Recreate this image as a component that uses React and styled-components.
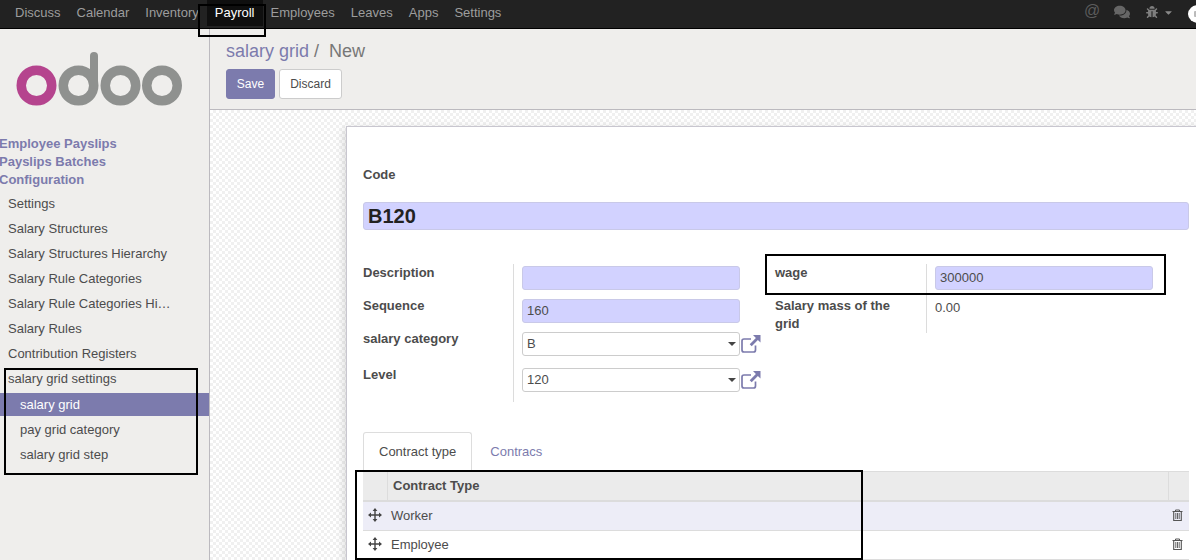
import React from "react";
import styled, { createGlobalStyle } from "styled-components";
import { FaComments, FaBug, FaCaretDown } from "react-icons/fa";

const Global = createGlobalStyle`
  html, body { margin: 0; padding: 0; width: 1196px; height: 560px; overflow: hidden; background: #fff; }
  body { font-family: "Liberation Sans", Arial, sans-serif; font-size: 13px; color: #4c4c4c; }
  * { box-sizing: border-box; }
`;

const Page = styled.div`
  position: relative;
  width: 1196px;
  height: 560px;
  overflow: hidden;
  display: flex;
  flex-direction: column;
`;
const TopNav = styled.nav`
  height: 29px;
  flex: none;
  background: #222;
  border-bottom: 1px solid #000;
  padding-left: 7px;
  display: flex;
  align-items: flex-start;
  overflow: hidden;
`;
const NavItem = styled.div`
  height: 26px;
  line-height: 26px;
  padding: 0 8px;
  color: ${(p) => (p.$active ? "#fff" : "#9d9d9d")};
  background: ${(p) => (p.$active ? "#0f0f0f" : "transparent")};
`;
const NavRight = styled.div`
  margin-left: auto;
  display: flex;
  align-items: center;
  height: 28px;
  color: #666;
  width: 112px;
  flex: none;
`;
const At = styled.span`
  font-size: 16px;
  width: 30px;
  margin-bottom: 6px;
  flex: none;
  color: #5c5c5c;
`;
const NavIcon = styled.span`
  display: inline-flex;
  flex: none;
  margin-bottom: 4px;
  margin-right: ${(p) => p.$gap || 0}px;
`;
const Avatar = styled.span`
  width: 20px;
  height: 18px;
  border-radius: 50% 0 0 50%;
  background: #fff;
  margin-left: 14px;
  flex: none;
  display: flex;
  align-items: center;
  padding-left: 6px;
  &::after {
    content: "";
    width: 6px;
    height: 6px;
    background: #bbb;
    border-radius: 1px;
  }
`;
const Main = styled.div`
  flex: 1;
  display: flex;
  min-height: 0;
`;
const Sidebar = styled.aside`
  width: 210px;
  flex: none;
  background: #efeeec;
  border-right: 1px solid #bcbabf;
`;
const LogoWrap = styled.div`
  height: 106px;
  padding: 17px 0 0 16px;
`;
const TopLink = styled.div`
  font-weight: 700;
  color: #7c7bad;
  line-height: 18px;
  margin-left: -1px;
`;
const TopLinks = styled.div`
  margin-bottom: 2px;
`;
const MenuItem = styled.div`
  height: 25px;
  line-height: 25px;
  padding-left: ${(p) => (p.$sub ? 20 : 8)}px;
  color: #4c4c4c;
  white-space: nowrap;
`;
const ActiveSubItem = styled(MenuItem)`
  height: 23px;
  line-height: 23px;
  margin: 2px 0 1px;
  color: #fff;
  background: #7c7bad;
`;
const Content = styled.section`
  flex: 1;
  min-width: 0;
  display: flex;
  flex-direction: column;
`;
const ControlPanel = styled.header`
  height: 81px;
  flex: none;
  background: #efeeec;
  border-bottom: 1px solid #bcbabf;
  padding: 10px 0 0 16px;
`;
const Breadcrumb = styled.div`
  font-size: 18px;
  line-height: 24px;
  height: 30px;
  color: #777;
`;
const Crumb = styled.span`
  color: #7c7bad;
`;
const Buttons = styled.div`
  display: flex;
  gap: 4px;
`;
const Button = styled.button`
  height: 30px;
  padding: 0;
  width: ${(p) => p.$w}px;
  font: 12px "Liberation Sans", Arial, sans-serif;
  border-radius: 3px;
  border: 1px solid ${(p) => (p.$primary ? "#7c7bad" : "#ccc")};
  background: ${(p) => (p.$primary ? "#7c7bad" : "#fff")};
  color: ${(p) => (p.$primary ? "#fff" : "#4c4c4c")};
`;
const Checker = styled.div`
  flex: 1;
  min-height: 0;
  padding: 16px 0 0 136px;
  background-color: #fff;
  background-image: repeating-conic-gradient(#f0f0f0 0 25%, #fff 0 50%);
  background-size: 6px 6px;
`;
const Sheet = styled.div`
  width: 860px;
  height: 500px;
  background: #fff;
  border: 1px solid #c8c6cf;
  box-shadow: -2px 2px 8px rgba(0, 0, 0, 0.14);
  padding: 39px 0 0 16px;
`;
const FieldLabel = styled.label`
  display: block;
  font-weight: 700;
  color: #4c4c4c;
  line-height: 18px;
`;
const GroupLabel = styled(FieldLabel)`
  padding-right: 10px;
`;
const TitleInput = styled.div`
  margin-top: 18px;
  width: 826px;
  height: 28px;
  background: #d2d2ff;
  border: 1px solid #c9c9e8;
  border-radius: 3px;
  font-size: 20px;
  font-weight: 700;
  color: #222;
  line-height: 26px;
  padding-left: 4px;
`;
const Groups = styled.div`
  display: flex;
  margin-top: 34px;
  height: 138px;
`;
const LeftGroup = styled.div`
  width: 402px;
  flex: none;
  display: grid;
  grid-template-columns: 150px 252px;
  grid-auto-rows: min-content;
`;
const LabelCell = styled.div`
  height: ${(p) => p.$h || 33}px;
`;
const ValueCell = styled.div`
  height: ${(p) => p.$h || 33}px;
  border-left: 1px solid #dcdcdc;
  padding: 2px 0 0 8px;
  display: flex;
  align-items: flex-start;
`;
const Input = styled.div`
  width: 218px;
  height: 24px;
  background: #d2d2ff;
  border: 1px solid #c9c9e8;
  border-radius: 3px;
  line-height: 22px;
  padding-left: 4px;
  color: #4c4c4c;
`;
const Select = styled(Input)`
  background: #fff;
  border-color: #ccc;
  display: flex;
  align-items: center;
  justify-content: space-between;
  padding-right: 3px;
`;
const Caret = styled.span`
  width: 0;
  height: 0;
  border-left: 4px solid transparent;
  border-right: 4px solid transparent;
  border-top: 4px solid #444;
`;
const ExtLink = styled.svg`
  margin: 2px 0 0 1px;
  flex: none;
`;
const RightGroup = styled.div`
  margin-left: 10px;
  display: grid;
  grid-template-columns: 151px 240px;
  grid-auto-rows: min-content;
`;
const RightLabel = styled.div`
  height: ${(p) => p.$h}px;
`;
const RightValue = styled.div`
  height: ${(p) => p.$h}px;
  border-left: 1px solid #dcdcdc;
  padding: ${(p) => (p.$plain ? 1 : 2)}px 0 0 8px;
  line-height: 20px;
`;
const Tabs = styled.div`
  margin-top: 30px;
  display: flex;
  height: 39px;
  width: 826px;
`;
const Tab = styled.div`
  height: 39px;
  padding: 0 15px;
  line-height: 38px;
  color: ${(p) => (p.$active ? "#4c4c4c" : "#7c7bad")};
  background: #fff;
  border: 1px solid ${(p) => (p.$active ? "#ddd" : "transparent")};
  border-bottom: none;
  border-radius: 3px 3px 0 0;
  margin-right: 2px;
`;
const TableBox = styled.div`
  width: 826px;
  border-top: 1px solid #dcdcdc;
`;
const HeadRow = styled.div`
  display: grid;
  grid-template-columns: 24px 1fr 21px;
  height: 30px;
  background: #ebebeb;
  border-bottom: 2px solid #dcdcdc;
`;
const HeadCell = styled.div`
  font-weight: 700;
  line-height: 27px;
  padding-left: ${(p) => (p.$text ? 5 : 0)}px;
  border-left: ${(p) => (p.$text || p.$end ? "1px solid #dcdcdc" : "none")};
`;
const Row = styled.div`
  display: grid;
  grid-template-columns: 24px 1fr 21px;
  height: 29px;
  padding-bottom: 2px;
  align-items: center;
  background: ${(p) => (p.$hl ? "#ededf7" : "#fff")};
  border-bottom: 1px solid #dcdcdc;
`;
const RowText = styled.div`
  padding-left: 4px;
`;
const Handle = styled.svg`
  justify-self: center;
`;
const Trash = styled.svg`
  justify-self: center;
  margin-right: 2px;
`;
const Mark = styled.div`
  position: absolute;
  left: ${(p) => p.$x}px;
  top: ${(p) => p.$y}px;
  width: ${(p) => p.$w}px;
  height: ${(p) => p.$h}px;
  border: 2px solid #000;
  pointer-events: none;
`;

const OdooLogo = () => (
  <svg width="170" height="60" viewBox="0 0 170 60" fill="none">
    <circle cx="20.5" cy="39.5" r="15.25" stroke="#b5448e" strokeWidth="9.5" />
    <circle cx="62.5" cy="39.5" r="15.25" stroke="#8f918f" strokeWidth="9.5" />
    <path d="M78 39V10" stroke="#8f918f" strokeWidth="8" strokeLinecap="round" />
    <circle cx="104.5" cy="39.5" r="15.25" stroke="#8f918f" strokeWidth="9.5" />
    <circle cx="146" cy="39.5" r="15.25" stroke="#8f918f" strokeWidth="9.5" />
  </svg>
);
const ExternalIcon = () => (
  <ExtLink width="20" height="20" viewBox="0 0 20 20" fill="none">
    <path d="M14.5 11.5v4.5a2 2 0 0 1-2 2H3a2 2 0 0 1-2-2V7a2 2 0 0 1 2-2h7" stroke="#7c7bad" strokeWidth="1.7" />
    <path d="M12 1h7.5v7.5l-2.6-2.6-6.2 6.4-2-2 6.2-6.4z" fill="#7c7bad" />
  </ExtLink>
);
const MoveIcon = () => (
  <Handle width="14" height="14" viewBox="0 0 14 14" fill="#444">
    <path d="M6.3 2.5h1.4v9H6.3z M2.5 6.3h9v1.4h-9z" />
    <path d="M7 0l2.4 3H4.6z M7 14l-2.4-3h4.8z M0 7l3-2.4v4.8z M14 7l-3 2.4V4.6z" />
  </Handle>
);
const TrashIcon = () => (
  <Trash width="11" height="12" viewBox="0 0 11 12" fill="none" stroke="#555">
    <path d="M0.5 2.5h10M3.5 2.5V1h4v1.5" strokeWidth="1" />
    <path d="M1.7 2.5v9h7.6v-9" strokeWidth="1.1" />
    <path d="M3.8 4v6M5.5 4v6M7.2 4v6" strokeWidth="0.9" />
  </Trash>
);

const menu = ["Settings", "Salary Structures", "Salary Structures Hierarchy", "Salary Rule Categories", "Salary Rule Categories Hi…", "Salary Rules", "Contribution Registers", "salary grid settings"];

export default function App() {
  return (
    <Page>
      <Global />
      <TopNav>
        {["Discuss", "Calendar", "Inventory", "Payroll", "Employees", "Leaves", "Apps", "Settings"].map((n) => (
          <NavItem key={n} $active={n === "Payroll"}>{n}</NavItem>
        ))}
        <NavRight>
          <At>@</At>
          <NavIcon $gap={16}><FaComments size={16} /></NavIcon>
          <NavIcon $gap={5}><FaBug size={12} color="#7f7f7f" /></NavIcon>
          <NavIcon><FaCaretDown size={11} color="#8a8a8a" /></NavIcon>
          <Avatar />
        </NavRight>
      </TopNav>
      <Main>
        <Sidebar>
          <LogoWrap><OdooLogo /></LogoWrap>
          <TopLinks>
            <TopLink>Employee Payslips</TopLink>
            <TopLink>Payslips Batches</TopLink>
            <TopLink>Configuration</TopLink>
          </TopLinks>
          {menu.map((m) => <MenuItem key={m}>{m}</MenuItem>)}
          <ActiveSubItem $sub>salary grid</ActiveSubItem>
          <MenuItem $sub>pay grid category</MenuItem>
          <MenuItem $sub>salary grid step</MenuItem>
        </Sidebar>
        <Content>
          <ControlPanel>
            <Breadcrumb><Crumb>salary grid</Crumb> /&nbsp; New</Breadcrumb>
            <Buttons>
              <Button $primary $w={49}>Save</Button>
              <Button $w={63}>Discard</Button>
            </Buttons>
          </ControlPanel>
          <Checker>
            <Sheet>
              <FieldLabel>Code</FieldLabel>
              <TitleInput>B120</TitleInput>
              <Groups>
                <LeftGroup>
                  <LabelCell><GroupLabel>Description</GroupLabel></LabelCell>
                  <ValueCell><Input /></ValueCell>
                  <LabelCell><GroupLabel>Sequence</GroupLabel></LabelCell>
                  <ValueCell><Input>160</Input></ValueCell>
                  <LabelCell $h={36}><GroupLabel>salary category</GroupLabel></LabelCell>
                  <ValueCell $h={36}><Select>B<Caret /></Select><ExternalIcon /></ValueCell>
                  <LabelCell $h={36}><GroupLabel>Level</GroupLabel></LabelCell>
                  <ValueCell $h={36}><Select>120<Caret /></Select><ExternalIcon /></ValueCell>
                </LeftGroup>
                <RightGroup>
                  <RightLabel $h={33}><GroupLabel>wage</GroupLabel></RightLabel>
                  <RightValue $h={33}><Input>300000</Input></RightValue>
                  <RightLabel $h={36}><GroupLabel>Salary mass of the grid</GroupLabel></RightLabel>
                  <RightValue $h={36} $plain>0.00</RightValue>
                </RightGroup>
              </Groups>
              <Tabs>
                <Tab $active>Contract type</Tab>
                <Tab>Contracs</Tab>
              </Tabs>
              <TableBox>
                <HeadRow>
                  <HeadCell />
                  <HeadCell $text>Contract Type</HeadCell>
                  <HeadCell $end />
                </HeadRow>
                <Row $hl>
                  <MoveIcon />
                  <RowText>Worker</RowText>
                  <TrashIcon />
                </Row>
                <Row>
                  <MoveIcon />
                  <RowText>Employee</RowText>
                  <TrashIcon />
                </Row>
              </TableBox>
            </Sheet>
          </Checker>
        </Content>
      </Main>
      <Mark $x={198} $y={4} $w={68} $h={33} />
      <Mark $x={4} $y={368} $w={194} $h={107} />
      <Mark $x={765} $y={254} $w={401} $h={41} />
      <Mark $x={355} $y={470} $w={508} $h={90} />
    </Page>
  );
}
